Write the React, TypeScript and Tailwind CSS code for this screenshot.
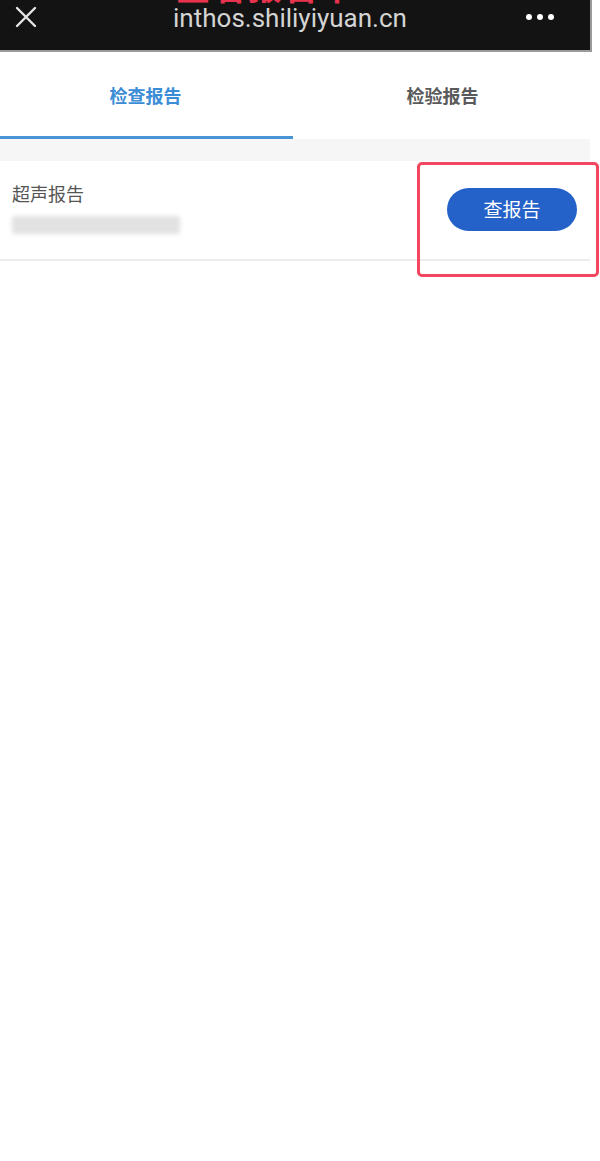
import React from "react";

const font = { fontFamily: '"Noto Sans CJK SC", "Noto Sans", sans-serif' };

function TopBar() {
  return (
    <div className="relative w-[592px] h-[52px] bg-[#131313] border-r-2 border-b-2 border-[#9a9a9a] overflow-hidden">
      {/* clipped red annotation text */}
      <div
        className="absolute left-[176px] top-[-31px] text-[34px] leading-none font-bold text-[#e8334f] tracking-[2px]"
        style={font}
      >
        查看报告单
      </div>
      <div className="flex h-full items-center justify-between pl-[14px] pr-[36px]">
        <svg width="24" height="24" viewBox="0 0 24 24" className="mt-[-14px]">
          <path d="M3 2 L21 20 M21 2 L3 20" stroke="#e6e6e6" strokeWidth="2.4" strokeLinecap="round" />
        </svg>
        <div
          className="mt-[-14px] ml-[16px] text-[26px] leading-[30px] text-[#d4d4d4]"
          style={{ fontFamily: 'Roboto, "Noto Sans", sans-serif' }}
        >
          inthos.shiliyiyuan.cn
        </div>
        <div className="flex gap-[5px] mt-[-16px]">
          <span className="w-[6px] h-[6px] rounded-full bg-white" />
          <span className="w-[6px] h-[6px] rounded-full bg-white" />
          <span className="w-[6px] h-[6px] rounded-full bg-white" />
        </div>
      </div>
    </div>
  );
}

export default function App() {
  return (
    <div className="relative w-[600px] h-[1161px] bg-white overflow-hidden" style={font}>
      <TopBar />

      <div className="flex w-[590px] h-[87px]">
        <div className="flex-1 flex flex-col">
          <div className="flex-1 flex items-center justify-center pt-[2px] pr-[4px] text-[18px] font-bold text-[#3a8dd6]">
            检查报告
          </div>
          <div className="h-[3px] w-[293px] bg-[#4a93d4]" />
        </div>
        <div className="flex-1 flex flex-col">
          <div className="flex-1 flex items-center justify-center pt-[2px] text-[18px] font-bold text-[#5a5a5a]">
            检验报告
          </div>
          <div className="h-[3px]" />
        </div>
      </div>

      <div className="w-[590px] h-[22px] bg-[#f6f6f6]" />

      <div className="flex w-[590px] h-[100px] items-center justify-between border-b-2 border-[#ececec] pl-[12px] pr-[13px]">
        <div className="flex flex-col gap-[12px] mt-[-4px]">
          <div className="text-[18px] leading-[22px] text-[#555]">超声报告</div>
          <div className="h-[18px] w-[168px] rounded-[3px] bg-[#e2e2e2] blur-[2px]" />
        </div>
        <button className="w-[130px] h-[43px] rounded-full bg-[#2462c9] text-white text-[19px] mt-[-2px]">
          查报告
        </button>
      </div>

      {/* red highlight annotation */}
      <div className="absolute left-[417px] top-[162px] w-[182px] h-[115px] rounded-[5px] border-[3px] border-[#f2475e]" />
    </div>
  );
}
